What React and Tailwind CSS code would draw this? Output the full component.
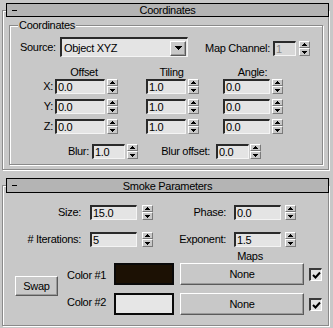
import React from "react";

const FONT = "font-['Liberation_Sans',Arial,sans-serif]";

function Tri({ down }) {
  return (
    <svg width="5" height="3" viewBox="0 0 5 3" shapeRendering="crispEdges">
      {down ? (
        <polygon points="0,0 5,0 2.5,3" fill="#000" />
      ) : (
        <polygon points="2.5,0 5,3 0,3" fill="#000" />
      )}
    </svg>
  );
}

function Spinner({ className = "" }) {
  return (
    <div className={"flex flex-col w-[11px] h-[15px] shrink-0 " + className}>
      <div className="h-[7px] flex items-center justify-center border border-t-white border-l-white border-b-[#7a7a7a] border-r-[#7a7a7a] bg-[#c8c8c8]">
        <Tri />
      </div>
      <div className="h-[8px] flex items-center justify-center border border-t-white border-l-white border-b-[#7a7a7a] border-r-[#7a7a7a] bg-[#c8c8c8]">
        <Tri down />
      </div>
    </div>
  );
}

function Field({ w, value, className = "", disabled }) {
  return (
    <div
      className={
        w +
        " h-[15px] shrink-0 border-t-2 border-l-2 border-b border-r border-t-[#2a2a2a] border-l-[#2a2a2a] border-b-[#f4f4f4] border-r-[#f4f4f4] pl-[1px] leading-[12px] whitespace-nowrap overflow-hidden " +
        (disabled ? "bg-[#d8d8d8] text-[#8a8a8a] " : "bg-[#e4e4e4] ") +
        className
      }
    >
      {value}
    </div>
  );
}

function Header({ title, className = "" }) {
  return (
    <div
      className={
        "relative z-10 ml-[6px] mr-[4px] border border-black bg-[#b4b4b4] flex items-center " +
        className
      }
    >
      <div className="ml-[5px] w-[5px] h-[1px] bg-black shrink-0" />
      <div className="flex-1 mr-[10px] text-center leading-[12px]">{title}</div>
    </div>
  );
}

function RaisedButton({ className = "", children }) {
  return (
    <div
      className={
        "flex items-center justify-center border border-t-white border-l-white border-b-[#5a5a5a] border-r-[#5a5a5a] shadow-[inset_-1px_-1px_0_#9a9a9a] bg-[#c8c8c8] leading-[12px] " +
        className
      }
    >
      {children}
    </div>
  );
}

function Check({ className = "" }) {
  return (
    <div
      className={
        "w-[13px] h-[13px] shrink-0 border-t-2 border-l-2 border-b border-r border-t-[#3a3a3a] border-l-[#3a3a3a] border-b-white border-r-white bg-[#e4e4e4] flex items-center justify-center " +
        className
      }
    >
      <svg width="9" height="8" viewBox="0 0 9 8">
        <path d="M1 4 L3.5 6.5 L8 1.5" stroke="#000" strokeWidth="2" fill="none" />
      </svg>
    </div>
  );
}

export default function App() {
  return (
    <div
      className={
        "w-[333px] h-[328px] overflow-hidden bg-[#c8c8c8] text-black text-[11px] tracking-[-0.3px] pt-[3px] " +
        FONT
      }
    >
      {/* Rollout 1 */}
      <Header title="Coordinates" className="h-[14px]" />
      <div className="-mt-[7px] ml-[2px] mr-[4px] h-[160px] border border-[#8a8a8a] shadow-[inset_1px_1px_0_#fff,1px_1px_0_#fff] flex flex-col">
        <div className="mt-[14px] ml-[6px] mr-[5px] h-[140px] border border-[#8a8a8a] shadow-[inset_1px_1px_0_#fff,1px_1px_0_#fff] flex flex-col">
          <div className="-mt-[7px] ml-[8px] w-fit px-[1px] h-[13px] leading-[13px] bg-[#c8c8c8]">
            Coordinates
          </div>

          {/* Source row */}
          <div className="mt-[5px] h-[20px] flex items-center">
            <div className="ml-[10px] w-[40px] leading-[13px]">Source:</div>
            <div className="w-[128px] h-[20px] shrink-0 border-t-2 border-l-2 border-b border-r border-t-[#2a2a2a] border-l-[#2a2a2a] border-b-[#f4f4f4] border-r-[#f4f4f4] bg-[#e4e4e4] flex items-center">
              <div className="flex-1 pl-[2px] mt-[1px] leading-[13px]">Object XYZ</div>
              <RaisedButton className="w-[16px] h-[15px] mr-[1px] mt-[1px]">
                <svg width="7" height="4" viewBox="0 0 7 4" shapeRendering="crispEdges">
                  <polygon points="0,0 7,0 3.5,4" fill="#000" />
                </svg>
              </RaisedButton>
            </div>
            <div className="mt-[3px] flex items-center">
              <div className="w-[82px] text-right leading-[13px]">Map Channel:</div>
              <Field w="w-[23px]" value="1" disabled className="ml-[3px]" />
              <Spinner className="ml-[3px]" />
            </div>
          </div>

          {/* Column headers */}
          <div className="mt-[9px] h-[13px] flex leading-[13px]">
            <div className="ml-[50px] w-[48px] text-center">Offset</div>
            <div className="ml-[39px] w-[49px] text-center">Tiling</div>
            <div className="ml-[32px] w-[49px] text-center">Angle:</div>
          </div>

          {/* XYZ rows */}
          <div className="flex flex-col gap-[5px]">
            {["X:", "Y:", "Z:"].map((l) => (
              <div key={l} className="h-[15px] flex items-center">
                <div className="w-[43px] text-right leading-[13px]">{l}</div>
                <Field w="w-[50px]" value="0.0" className="ml-[2px]" />
                <Spinner className="ml-[2px]" />
                <Field w="w-[40px]" value="1.0" className="ml-[28px]" />
                <Spinner className="ml-[2px]" />
                <Field w="w-[47px]" value="0.0" className="ml-[24px]" />
                <Spinner className="ml-[2px]" />
              </div>
            ))}
          </div>

          {/* Blur row */}
          <div className="mt-[10px] h-[15px] flex items-center">
            <div className="w-[79px] text-right leading-[13px]">Blur:</div>
            <Field w="w-[33px]" value="1.0" className="ml-[3px]" />
            <Spinner className="ml-[2px]" />
            <div className="w-[72px] text-right leading-[13px]">Blur offset:</div>
            <Field w="w-[33px]" value="0.0" className="ml-[6px]" />
            <Spinner className="ml-[1px]" />
          </div>
        </div>
      </div>

      {/* Rollout 2 */}
      <Header title="Smoke Parameters" className="mt-[8px] h-[15px]" />
      <div className="-mt-[8px] ml-[2px] mr-[4px] h-[141px] border border-[#8a8a8a] shadow-[inset_1px_1px_0_#fff,1px_1px_0_#fff] flex flex-col">
        <div className="mt-[19px] h-[15px] flex items-center">
          <div className="w-[78px] text-right leading-[13px]">Size:</div>
          <Field w="w-[47px]" value="15.0" className="ml-[9px]" />
          <Spinner className="ml-[5px]" />
          <div className="w-[73px] text-right leading-[13px]">Phase:</div>
          <Field w="w-[47px]" value="0.0" className="ml-[8px]" />
          <Spinner className="ml-[4px]" />
        </div>
        <div className="mt-[12px] h-[15px] flex items-center">
          <div className="w-[78px] text-right leading-[13px] whitespace-nowrap">
            # Iterations:
          </div>
          <Field w="w-[47px]" value="5" className="ml-[9px]" />
          <Spinner className="ml-[5px]" />
          <div className="w-[73px] text-right leading-[13px]">Exponent:</div>
          <Field w="w-[47px]" value="1.5" className="ml-[8px]" />
          <Spinner className="ml-[4px]" />
        </div>
        <div className="mt-[3px] ml-[217px] w-[60px] h-[13px] leading-[13px] text-center">
          Maps
        </div>
        <div className="flex items-start">
          <RaisedButton className="ml-[12px] mt-[13px] w-[43px] h-[20px] shrink-0">Swap</RaisedButton>
          <div className="flex flex-col gap-[8px]">
            <div className="h-[22px] flex items-center">
              <div className="ml-[9px] w-[47px] leading-[13px] whitespace-nowrap mt-[3px]">Color #1</div>
              <div className="w-[60px] h-[22px] border-2 border-[#0a0a0a] bg-[#1c1104] shrink-0" />
              <RaisedButton className="ml-[6px] w-[124px] h-[22px] shrink-0">None</RaisedButton>
              <Check className="ml-[5px]" />
            </div>
            <div className="h-[22px] flex items-center">
              <div className="ml-[9px] w-[47px] leading-[13px] whitespace-nowrap -mt-[3px]">Color #2</div>
              <div className="w-[60px] h-[22px] border-2 border-[#0a0a0a] bg-[#e6e6e6] shrink-0" />
              <RaisedButton className="ml-[6px] w-[124px] h-[22px] shrink-0">None</RaisedButton>
              <Check className="ml-[5px]" />
            </div>
          </div>
        </div>
      </div>
    </div>
  );
}
